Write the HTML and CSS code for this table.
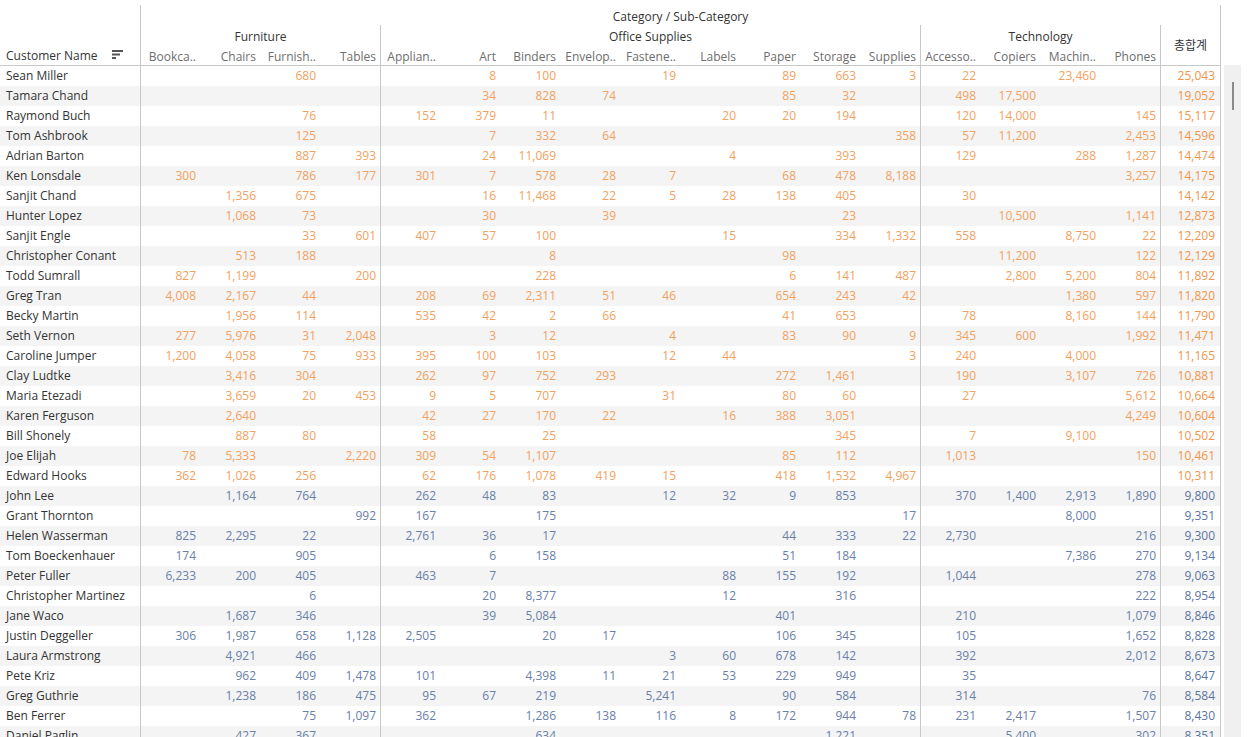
FILE: index.html
```html
<!DOCTYPE html>
<html>
<head>
<meta charset="utf-8">
<link rel="stylesheet" href="styles.css">
</head>
<body>
<div class="page">
  <div class="sheet">
    <div class="head">
      <div class="h-name"><span>Customer Name</span>
        <svg class="sort" width="12" height="9" viewBox="0 0 12 9"><rect x="0" y="0" width="11" height="2" fill="#555"/><rect x="0" y="3.5" width="8" height="2" fill="#555"/><rect x="0" y="7" width="4" height="2" fill="#555"/></svg>
      </div>
      <div class="h-title">Category / Sub-Category</div>
      <div class="h-cat c-fur">Furniture</div>
      <div class="h-cat c-off">Office Supplies</div>
      <div class="h-cat c-tec">Technology</div>
      <div class="h-total">총합계</div>
      <div class="h-sub g">Bookca..</div><div class="h-sub">Chairs</div><div class="h-sub">Furnish..</div><div class="h-sub">Tables</div>
      <div class="h-sub g">Applian..</div><div class="h-sub">Art</div><div class="h-sub">Binders</div><div class="h-sub">Envelop..</div><div class="h-sub">Fastene..</div><div class="h-sub">Labels</div><div class="h-sub">Paper</div><div class="h-sub">Storage</div><div class="h-sub">Supplies</div>
      <div class="h-sub g">Accesso..</div><div class="h-sub">Copiers</div><div class="h-sub">Machin..</div><div class="h-sub">Phones</div>
    </div>
    <div class="body">
      <div class="r o"><span>Sean Miller</span><span></span><span></span><span>680</span><span></span><span></span><span>8</span><span>100</span><span></span><span>19</span><span></span><span>89</span><span>663</span><span>3</span><span>22</span><span></span><span>23,460</span><span></span><span>25,043</span></div>
      <div class="r o"><span>Tamara Chand</span><span></span><span></span><span></span><span></span><span></span><span>34</span><span>828</span><span>74</span><span></span><span></span><span>85</span><span>32</span><span></span><span>498</span><span>17,500</span><span></span><span></span><span>19,052</span></div>
      <div class="r o"><span>Raymond Buch</span><span></span><span></span><span>76</span><span></span><span>152</span><span>379</span><span>11</span><span></span><span></span><span>20</span><span>20</span><span>194</span><span></span><span>120</span><span>14,000</span><span></span><span>145</span><span>15,117</span></div>
      <div class="r o"><span>Tom Ashbrook</span><span></span><span></span><span>125</span><span></span><span></span><span>7</span><span>332</span><span>64</span><span></span><span></span><span></span><span></span><span>358</span><span>57</span><span>11,200</span><span></span><span>2,453</span><span>14,596</span></div>
      <div class="r o"><span>Adrian Barton</span><span></span><span></span><span>887</span><span>393</span><span></span><span>24</span><span>11,069</span><span></span><span></span><span>4</span><span></span><span>393</span><span></span><span>129</span><span></span><span>288</span><span>1,287</span><span>14,474</span></div>
      <div class="r o"><span>Ken Lonsdale</span><span>300</span><span></span><span>786</span><span>177</span><span>301</span><span>7</span><span>578</span><span>28</span><span>7</span><span></span><span>68</span><span>478</span><span>8,188</span><span></span><span></span><span></span><span>3,257</span><span>14,175</span></div>
      <div class="r o"><span>Sanjit Chand</span><span></span><span>1,356</span><span>675</span><span></span><span></span><span>16</span><span>11,468</span><span>22</span><span>5</span><span>28</span><span>138</span><span>405</span><span></span><span>30</span><span></span><span></span><span></span><span>14,142</span></div>
      <div class="r o"><span>Hunter Lopez</span><span></span><span>1,068</span><span>73</span><span></span><span></span><span>30</span><span></span><span>39</span><span></span><span></span><span></span><span>23</span><span></span><span></span><span>10,500</span><span></span><span>1,141</span><span>12,873</span></div>
      <div class="r o"><span>Sanjit Engle</span><span></span><span></span><span>33</span><span>601</span><span>407</span><span>57</span><span>100</span><span></span><span></span><span>15</span><span></span><span>334</span><span>1,332</span><span>558</span><span></span><span>8,750</span><span>22</span><span>12,209</span></div>
      <div class="r o"><span>Christopher Conant</span><span></span><span>513</span><span>188</span><span></span><span></span><span></span><span>8</span><span></span><span></span><span></span><span>98</span><span></span><span></span><span></span><span>11,200</span><span></span><span>122</span><span>12,129</span></div>
      <div class="r o"><span>Todd Sumrall</span><span>827</span><span>1,199</span><span></span><span>200</span><span></span><span></span><span>228</span><span></span><span></span><span></span><span>6</span><span>141</span><span>487</span><span></span><span>2,800</span><span>5,200</span><span>804</span><span>11,892</span></div>
      <div class="r o"><span>Greg Tran</span><span>4,008</span><span>2,167</span><span>44</span><span></span><span>208</span><span>69</span><span>2,311</span><span>51</span><span>46</span><span></span><span>654</span><span>243</span><span>42</span><span></span><span></span><span>1,380</span><span>597</span><span>11,820</span></div>
      <div class="r o"><span>Becky Martin</span><span></span><span>1,956</span><span>114</span><span></span><span>535</span><span>42</span><span>2</span><span>66</span><span></span><span></span><span>41</span><span>653</span><span></span><span>78</span><span></span><span>8,160</span><span>144</span><span>11,790</span></div>
      <div class="r o"><span>Seth Vernon</span><span>277</span><span>5,976</span><span>31</span><span>2,048</span><span></span><span>3</span><span>12</span><span></span><span>4</span><span></span><span>83</span><span>90</span><span>9</span><span>345</span><span>600</span><span></span><span>1,992</span><span>11,471</span></div>
      <div class="r o"><span>Caroline Jumper</span><span>1,200</span><span>4,058</span><span>75</span><span>933</span><span>395</span><span>100</span><span>103</span><span></span><span>12</span><span>44</span><span></span><span></span><span>3</span><span>240</span><span></span><span>4,000</span><span></span><span>11,165</span></div>
      <div class="r o"><span>Clay Ludtke</span><span></span><span>3,416</span><span>304</span><span></span><span>262</span><span>97</span><span>752</span><span>293</span><span></span><span></span><span>272</span><span>1,461</span><span></span><span>190</span><span></span><span>3,107</span><span>726</span><span>10,881</span></div>
      <div class="r o"><span>Maria Etezadi</span><span></span><span>3,659</span><span>20</span><span>453</span><span>9</span><span>5</span><span>707</span><span></span><span>31</span><span></span><span>80</span><span>60</span><span></span><span>27</span><span></span><span></span><span>5,612</span><span>10,664</span></div>
      <div class="r o"><span>Karen Ferguson</span><span></span><span>2,640</span><span></span><span></span><span>42</span><span>27</span><span>170</span><span>22</span><span></span><span>16</span><span>388</span><span>3,051</span><span></span><span></span><span></span><span></span><span>4,249</span><span>10,604</span></div>
      <div class="r o"><span>Bill Shonely</span><span></span><span>887</span><span>80</span><span></span><span>58</span><span></span><span>25</span><span></span><span></span><span></span><span></span><span>345</span><span></span><span>7</span><span></span><span>9,100</span><span></span><span>10,502</span></div>
      <div class="r o"><span>Joe Elijah</span><span>78</span><span>5,333</span><span></span><span>2,220</span><span>309</span><span>54</span><span>1,107</span><span></span><span></span><span></span><span>85</span><span>112</span><span></span><span>1,013</span><span></span><span></span><span>150</span><span>10,461</span></div>
      <div class="r o"><span>Edward Hooks</span><span>362</span><span>1,026</span><span>256</span><span></span><span>62</span><span>176</span><span>1,078</span><span>419</span><span>15</span><span></span><span>418</span><span>1,532</span><span>4,967</span><span></span><span></span><span></span><span></span><span>10,311</span></div>
      <div class="r b"><span>John Lee</span><span></span><span>1,164</span><span>764</span><span></span><span>262</span><span>48</span><span>83</span><span></span><span>12</span><span>32</span><span>9</span><span>853</span><span></span><span>370</span><span>1,400</span><span>2,913</span><span>1,890</span><span>9,800</span></div>
      <div class="r b"><span>Grant Thornton</span><span></span><span></span><span></span><span>992</span><span>167</span><span></span><span>175</span><span></span><span></span><span></span><span></span><span></span><span>17</span><span></span><span></span><span>8,000</span><span></span><span>9,351</span></div>
      <div class="r b"><span>Helen Wasserman</span><span>825</span><span>2,295</span><span>22</span><span></span><span>2,761</span><span>36</span><span>17</span><span></span><span></span><span></span><span>44</span><span>333</span><span>22</span><span>2,730</span><span></span><span></span><span>216</span><span>9,300</span></div>
      <div class="r b"><span>Tom Boeckenhauer</span><span>174</span><span></span><span>905</span><span></span><span></span><span>6</span><span>158</span><span></span><span></span><span></span><span>51</span><span>184</span><span></span><span></span><span></span><span>7,386</span><span>270</span><span>9,134</span></div>
      <div class="r b"><span>Peter Fuller</span><span>6,233</span><span>200</span><span>405</span><span></span><span>463</span><span>7</span><span></span><span></span><span></span><span>88</span><span>155</span><span>192</span><span></span><span>1,044</span><span></span><span></span><span>278</span><span>9,063</span></div>
      <div class="r b"><span>Christopher Martinez</span><span></span><span></span><span>6</span><span></span><span></span><span>20</span><span>8,377</span><span></span><span></span><span>12</span><span></span><span>316</span><span></span><span></span><span></span><span></span><span>222</span><span>8,954</span></div>
      <div class="r b"><span>Jane Waco</span><span></span><span>1,687</span><span>346</span><span></span><span></span><span>39</span><span>5,084</span><span></span><span></span><span></span><span>401</span><span></span><span></span><span>210</span><span></span><span></span><span>1,079</span><span>8,846</span></div>
      <div class="r b"><span>Justin Deggeller</span><span>306</span><span>1,987</span><span>658</span><span>1,128</span><span>2,505</span><span></span><span>20</span><span>17</span><span></span><span></span><span>106</span><span>345</span><span></span><span>105</span><span></span><span></span><span>1,652</span><span>8,828</span></div>
      <div class="r b"><span>Laura Armstrong</span><span></span><span>4,921</span><span>466</span><span></span><span></span><span></span><span></span><span></span><span>3</span><span>60</span><span>678</span><span>142</span><span></span><span>392</span><span></span><span></span><span>2,012</span><span>8,673</span></div>
      <div class="r b"><span>Pete Kriz</span><span></span><span>962</span><span>409</span><span>1,478</span><span>101</span><span></span><span>4,398</span><span>11</span><span>21</span><span>53</span><span>229</span><span>949</span><span></span><span>35</span><span></span><span></span><span></span><span>8,647</span></div>
      <div class="r b"><span>Greg Guthrie</span><span></span><span>1,238</span><span>186</span><span>475</span><span>95</span><span>67</span><span>219</span><span></span><span>5,241</span><span></span><span>90</span><span>584</span><span></span><span>314</span><span></span><span></span><span>76</span><span>8,584</span></div>
      <div class="r b"><span>Ben Ferrer</span><span></span><span></span><span>75</span><span>1,097</span><span>362</span><span></span><span>1,286</span><span>138</span><span>116</span><span>8</span><span>172</span><span>944</span><span>78</span><span>231</span><span>2,417</span><span></span><span>1,507</span><span>8,430</span></div>
      <div class="r b"><span>Daniel Paglin</span><span></span><span>427</span><span>367</span><span></span><span></span><span></span><span>634</span><span></span><span></span><span></span><span></span><span>1,221</span><span></span><span></span><span>5,400</span><span></span><span>302</span><span>8,351</span></div>
    </div>
  </div>
  <div class="scroll"><div class="thumb"></div></div>
</div>
</body>
</html>
```
FILE: styles.css
```css
html, body {
  margin: 0;
  padding: 0;
  background: #fff;
  height: 737px;
  overflow: hidden;
}
body {
  font-family: "Open Sans", "Noto Sans CJK KR", sans-serif;
  font-size: 12px;
  color: #333;
}
.page {
  display: flex;
  align-items: flex-start;
}
.sheet {
  width: 1221px;
  flex: none;
}
.head {
  display: grid;
  grid-template-columns: 140px repeat(17, 60px) 61px;
  grid-template-rows: 20px 20px 20px;
  margin-top: 5px;
  border-bottom: 1px solid #c8c8c8;
}
.head > div {
  box-sizing: border-box;
  line-height: 20px;
  padding-top: 2px;
  white-space: nowrap;
  overflow: hidden;
}
.h-name {
  grid-column: 1;
  grid-row: 1 / 4;
  display: flex;
  align-items: flex-end;
  justify-content: space-between;
  padding: 0 16px 0 6px;
}
.head > .h-name {
  padding-top: 0;
}
.h-name > span {
  line-height: 18px;
}
.h-name .sort {
  margin-bottom: 6px;
}
.h-title {
  grid-column: 2 / 20;
  grid-row: 1;
  text-align: center;
  border-left: 1px solid #c8c8c8;
  border-right: 1px solid #c8c8c8;
}
.h-cat {
  grid-row: 2;
  text-align: center;
  border-left: 1px solid #c8c8c8;
}
.c-fur { grid-column: 2 / 6; }
.c-off { grid-column: 6 / 15; }
.c-tec { grid-column: 15 / 19; }
.h-total {
  grid-column: 19;
  grid-row: 2 / 4;
  display: flex;
  align-items: center;
  justify-content: center;
  border-left: 1px solid #c8c8c8;
  border-right: 1px solid #c8c8c8;
  color: #333;
}
.h-sub {
  grid-row: 3;
  text-align: right;
  padding-right: 4px;
  color: #6e6e6e;
}
.h-sub.g {
  border-left: 1px solid #c8c8c8;
}
.r {
  display: grid;
  grid-template-columns: 140px repeat(17, 60px) 61px;
  height: 20px;
}
.r:nth-child(even) {
  background: #f4f4f4;
}
.r > span {
  box-sizing: border-box;
  line-height: 20px;
  text-align: right;
  padding-right: 4px;
  white-space: nowrap;
  overflow: hidden;
}
.r > span:first-child {
  text-align: left;
  padding: 0 0 0 6px;
  color: #333;
}
.r > span:nth-child(2),
.r > span:nth-child(6),
.r > span:nth-child(15),
.r > span:nth-child(19) {
  border-left: 1px solid #c8c8c8;
}
.r > span:nth-child(19) {
  border-right: 1px solid #c8c8c8;
  padding-right: 5px;
  font-weight: 500;
}
.r.o > span { color: #f2a15e; }
.r.b > span { color: #6a80a8; }
.r.o > span:nth-child(19) { color: #f0954a; }
.r.b > span:nth-child(19) { color: #5a74a2; }
.r.o > span:first-child,
.r.b > span:first-child { color: #333; }
.scroll {
  flex: none;
  width: 17px;
  height: 672px;
  margin-left: 3px;
  margin-top: 65px;
  background: #f0f0f0;
  display: flex;
  justify-content: center;
  padding-top: 17px;
  box-sizing: border-box;
}
.thumb {
  width: 2px;
  height: 28px;
  background: #8a8a8a;
}
```
